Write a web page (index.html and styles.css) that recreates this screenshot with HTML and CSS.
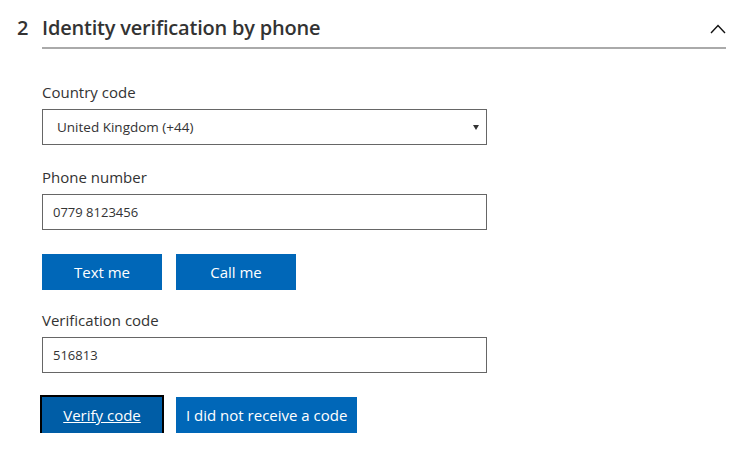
FILE: index.html
```html
<!DOCTYPE html>
<html lang="en">
<head>
<meta charset="utf-8">
<title>Identity verification by phone</title>
<link rel="stylesheet" href="styles.css">
</head>
<body>
<section class="step">
  <div class="step-head">
    <span class="step-num">2</span>
    <div class="step-title-row">
      <h2 class="step-title">Identity verification by phone</h2>
      <svg class="chevron" width="16" height="10" viewBox="0 0 16 10"><polyline points="1,9 8,1.5 15,9" fill="none" stroke="#111" stroke-width="1.4"/></svg>
    </div>
  </div>
  <form class="form">
    <div class="group first">
      <label class="label" for="cc">Country code</label>
      <div class="select-wrap">
        <select id="cc" class="field select"><option>United Kingdom (+44)</option></select>
      </div>
    </div>
    <div class="group">
      <label class="label" for="ph">Phone number</label>
      <input id="ph" class="field input" type="text" value="0779 8123456">
    </div>
    <div class="actions">
      <button type="button" class="btn">Text me</button>
      <button type="button" class="btn">Call me</button>
    </div>
    <div class="group after-actions">
      <label class="label" for="vc">Verification code</label>
      <input id="vc" class="field input" type="text" value="516813">
    </div>
    <div class="actions">
      <button type="button" class="btn btn-focus">Verify code</button>
      <button type="button" class="btn">I did not receive a code</button>
    </div>
  </form>
</section>
</body>
</html>
```
FILE: styles.css
```css
html, body {
  margin: 0;
  padding: 0;
  background: #fff;
}
body {
  font-family: "Open Sans", "Noto Sans", "Liberation Sans", sans-serif;
  color: #333;
}
.step {
  padding: 14px 24px 0 17px;
}
.step-head {
  display: flex;
  align-items: flex-start;
}
.step-num {
  width: 25px;
  font-size: 20px;
  font-weight: 600;
  line-height: 28px;
  color: #333;
}
.step-title-row {
  flex: 1;
  display: flex;
  justify-content: space-between;
  align-items: center;
  border-bottom: 2px solid #aaa;
  padding-bottom: 5px;
}
.step-title {
  margin: 0;
  font-size: 20px;
  font-weight: 600;
  letter-spacing: -0.2px;
  line-height: 28px;
  color: #333;
}
.chevron {
  display: block;
  margin-top: 2px;
}
.form {
  padding-left: 25px;
  width: 445px;
}
.group {
  display: flex;
  flex-direction: column;
  margin-top: 22px;
}
.group.first {
  margin-top: 33px;
}
.group.after-actions {
  margin-top: 20px;
}
.label {
  font-size: 15px;
  line-height: 20px;
  color: #333;
  margin-bottom: 7px;
}
.field {
  box-sizing: border-box;
  width: 445px;
  height: 36px;
  border: 1px solid #666;
  border-radius: 0;
  background: #fff;
  font-family: inherit;
  font-size: 13px;
  color: #333;
  margin: 0;
}
.input {
  padding: 0 10px;
}
.select-wrap {
  position: relative;
}
.select {
  -webkit-appearance: none;
  appearance: none;
  padding: 0 30px 0 14px;
  font-size: 13.5px;
  display: block;
}
.select-wrap::after {
  content: "";
  position: absolute;
  right: 8px;
  top: 16px;
  border-left: 3px solid transparent;
  border-right: 3px solid transparent;
  border-top: 5px solid #333;
  pointer-events: none;
}
.actions {
  display: flex;
  gap: 14px;
  margin-top: 24px;
}
.btn {
  box-sizing: border-box;
  min-width: 120px;
  height: 36px;
  padding: 0 10px;
  border: none;
  border-radius: 0;
  background: #0067b8;
  color: #fff;
  font-family: inherit;
  font-size: 15px;
  cursor: pointer;
}
.btn-focus {
  background: #005da6;
  outline: 2px solid #000;
  text-decoration: underline;
}
```
